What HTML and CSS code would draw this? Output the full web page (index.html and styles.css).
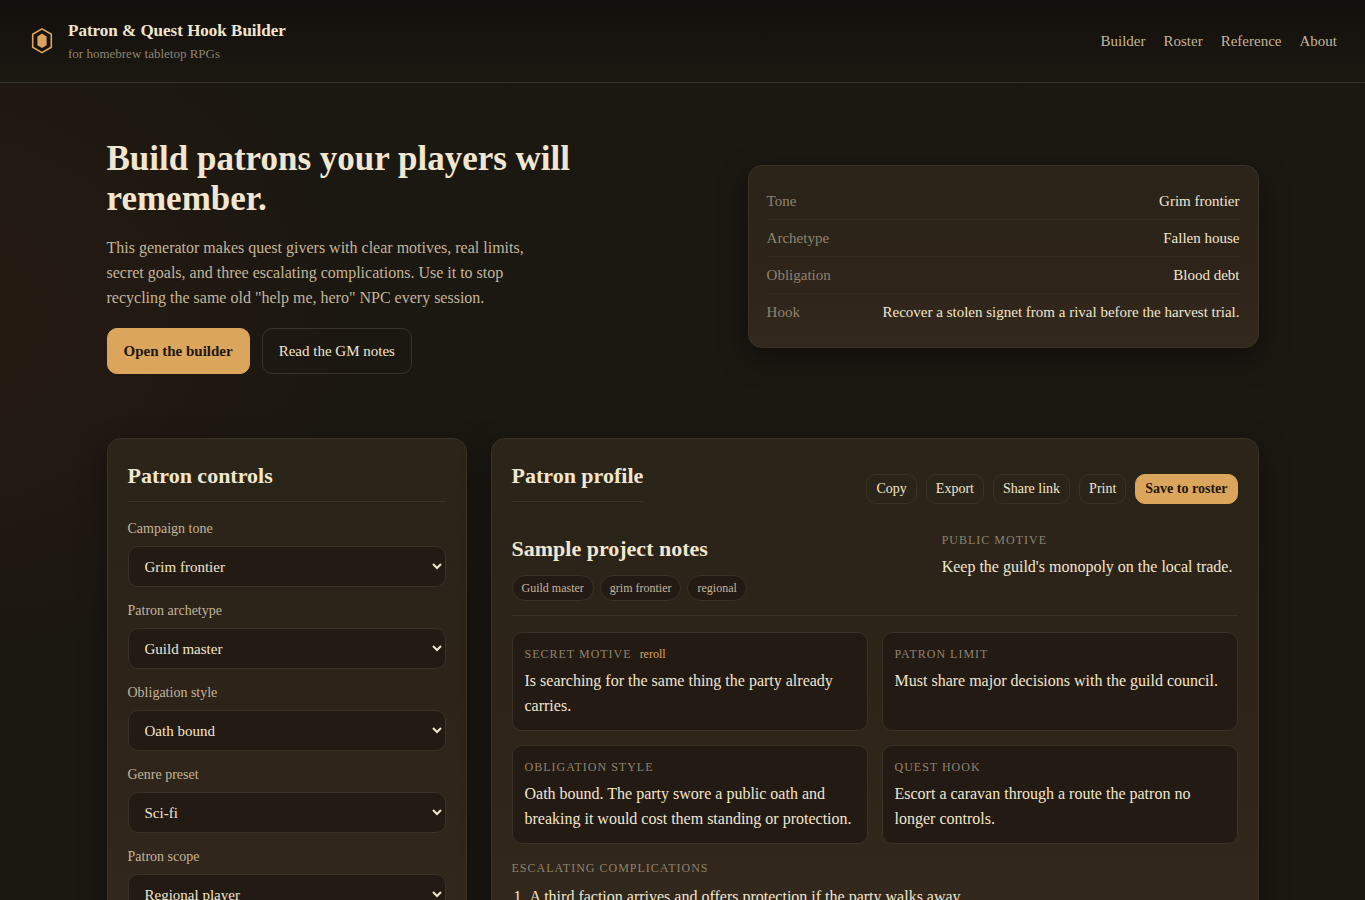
FILE: index.html
```html
<!DOCTYPE html>
<html lang="en">
<head>
  <meta charset="UTF-8">
  <meta name="viewport" content="width=device-width, initial-scale=1.0">
  <title>Patron &amp; Quest Hook Builder</title>
  <link rel="stylesheet" href="styles.css">
</head>
<body>
  <header class="site-header">
    <div class="brand">
      <svg class="brand-mark" viewBox="0 0 28 28" width="28" height="28" aria-hidden="true">
        <path d="M14 1.9 L23.3 7.2 V20.3 L14 25.6 L4.7 20.3 V7.2 Z" fill="none" stroke="currentColor" stroke-width="1.6"/>
        <path d="M14 6.6 L18.6 9.4 V18.2 L14 21 L9.4 18.2 V9.4 Z" fill="currentColor"/>
      </svg>
      <div>
        <p class="brand-title">Patron &amp; Quest Hook Builder</p>
        <p class="brand-sub">for homebrew tabletop RPGs</p>
      </div>
    </div>
    <nav class="site-nav">
      <a href="#builder">Builder</a>
      <a href="#roster">Roster</a>
      <a href="#reference">Reference</a>
      <a href="#about">About</a>
    </nav>
  </header>

  <main class="container">
    <section class="hero">
      <div>
        <h1>Build patrons your players will remember.</h1>
        <p class="hero-text">This generator makes quest givers with clear motives, real limits, secret goals, and three escalating complications. Use it to stop recycling the same old "help me, hero" NPC every session.</p>
        <div class="hero-actions">
          <a class="btn btn-primary" href="#builder">Open the builder</a>
          <a class="btn" href="#reference">Read the GM notes</a>
        </div>
      </div>
      <dl class="preview">
        <div class="preview-row"><dt>Tone</dt><dd>Grim frontier</dd></div>
        <div class="preview-row"><dt>Archetype</dt><dd>Fallen house</dd></div>
        <div class="preview-row"><dt>Obligation</dt><dd>Blood debt</dd></div>
        <div class="preview-row"><dt>Hook</dt><dd>Recover a stolen signet from a rival before the harvest trial.</dd></div>
      </dl>
    </section>

    <section class="builder" id="builder">
      <form class="panel">
        <h2>Patron controls</h2>
        <div class="field">
          <label for="tone">Campaign tone</label>
          <select id="tone">
            <option>Grim frontier</option>
            <option>High court</option>
          </select>
        </div>
        <div class="field">
          <label for="archetype">Patron archetype</label>
          <select id="archetype">
            <option>Guild master</option>
            <option>Fallen house</option>
          </select>
        </div>
        <div class="field">
          <label for="obligation">Obligation style</label>
          <select id="obligation">
            <option>Oath bound</option>
            <option>Blood debt</option>
          </select>
        </div>
        <div class="field">
          <label for="genre">Genre preset</label>
          <select id="genre">
            <option>Sci-fi</option>
            <option>Fantasy</option>
          </select>
        </div>
        <div class="field">
          <label for="scope">Patron scope</label>
          <select id="scope">
            <option>Regional player</option>
            <option>Local player</option>
          </select>
        </div>
      </form>

      <article class="panel">
        <div class="panel-head">
          <h2>Patron profile</h2>
          <div class="actions">
            <button class="btn btn-small" type="button">Copy</button>
            <button class="btn btn-small" type="button">Export</button>
            <button class="btn btn-small" type="button">Share link</button>
            <button class="btn btn-small" type="button">Print</button>
            <button class="btn btn-small btn-primary" type="button">Save to roster</button>
          </div>
        </div>

        <div class="profile-top">
          <div>
            <h3>Sample project notes</h3>
            <ul class="chips">
              <li>Guild master</li>
              <li>grim frontier</li>
              <li>regional</li>
            </ul>
          </div>
          <div>
            <h4 class="label">Public motive</h4>
            <p>Keep the guild's monopoly on the local trade.</p>
          </div>
        </div>

        <div class="cards">
          <div class="card">
            <div class="card-head">
              <h4 class="label">Secret motive</h4>
              <button class="reroll" type="button">reroll</button>
            </div>
            <p>Is searching for the same thing the party already carries.</p>
          </div>
          <div class="card">
            <h4 class="label">Patron limit</h4>
            <p>Must share major decisions with the guild council.</p>
          </div>
          <div class="card">
            <h4 class="label">Obligation style</h4>
            <p>Oath bound. The party swore a public oath and breaking it would cost them standing or protection.</p>
          </div>
          <div class="card">
            <h4 class="label">Quest hook</h4>
            <p>Escort a caravan through a route the patron no longer controls.</p>
          </div>
        </div>

        <h4 class="label">Escalating complications</h4>
        <ol class="complications">
          <li>A third faction arrives and offers protection if the party walks away.</li>
        </ol>
      </article>
    </section>
  </main>
</body>
</html>
```
FILE: styles.css
```css
:root {
  --bg: #1b1711;
  --field: #231a13;
  --line: #3a3226;
  --text: #f1e6cf;
  --muted: #c3b59b;
  --dim: #8f8370;
  --accent: #dba65c;
}

* {
  box-sizing: border-box;
  margin: 0;
  padding: 0;
}

body {
  font-family: "Liberation Serif", "Times New Roman", serif;
  font-size: 16px;
  line-height: 25px;
  color: var(--text);
  background: radial-gradient(420px 340px at -60px 320px, #271b13, transparent) var(--bg);
}

a {
  color: inherit;
  text-decoration: none;
}

/* Header */
.site-header {
  display: flex;
  align-items: center;
  justify-content: space-between;
  padding: 18px 28px;
  border-bottom: 1px solid #37332c;
  background: linear-gradient(#130f0c, #1b1711);
}

.brand {
  display: flex;
  align-items: center;
  gap: 12px;
}

.brand-mark {
  color: var(--accent);
}

.brand-title {
  font-size: 17px;
  line-height: 26px;
  font-weight: bold;
}

.brand-sub {
  font-size: 13px;
  line-height: 20px;
  color: var(--dim);
}

.site-nav {
  display: flex;
  gap: 18px;
  font-size: 15px;
  color: var(--muted);
}

.container {
  max-width: 1200px;
  margin: 0 auto;
  padding: 0 24px;
}

/* Hero */
.hero {
  display: grid;
  grid-template-columns: 1.2fr 1fr;
  align-items: center;
  gap: 28px;
  padding: 56px 0 64px;
}

h1 {
  max-width: 560px;
  margin-bottom: 16px;
  font-size: 35px;
  line-height: 40px;
}

.hero-text {
  max-width: 440px;
  margin-bottom: 18px;
  color: var(--muted);
}

.hero-actions {
  display: flex;
  gap: 12px;
}

.btn {
  padding: 10px 16px;
  border: 1px solid var(--line);
  border-radius: 10px;
  background: none;
  font-family: inherit;
  font-size: 15px;
  line-height: 24px;
  color: var(--text);
}

.btn-small {
  padding: 4px 9px;
  font-size: 14px;
  line-height: 20px;
}

.btn-primary {
  border-color: var(--accent);
  background: var(--accent);
  color: #1f160d;
  font-weight: bold;
}

.preview,
.panel {
  border: 1px solid var(--line);
  border-radius: 14px;
  background: linear-gradient(#2a2419, #2d2319 50%, #32281c);
  box-shadow: 0 10px 30px rgba(0, 0, 0, 0.35);
}

.preview {
  padding: 17px 18px;
  font-size: 15px;
  line-height: 24px;
}

.preview-row {
  display: flex;
  justify-content: space-between;
  gap: 16px;
  padding: 6px 0;
  border-bottom: 1px solid #33291f;
}

.preview-row:last-child {
  border-bottom: none;
}

.preview dt {
  color: var(--dim);
}

/* Builder */
.builder {
  display: grid;
  grid-template-columns: 360px 1fr;
  align-items: start;
  gap: 24px;
  padding-bottom: 64px;
}

.panel {
  padding: 20px;
}

h2 {
  margin-bottom: 16px;
  padding-bottom: 8px;
  border-bottom: 1px solid var(--line);
  font-size: 22px;
  line-height: 34px;
}

.field {
  margin-bottom: 13px;
}

.field label {
  display: block;
  margin-bottom: 6px;
  font-size: 14px;
  line-height: 22px;
  color: var(--muted);
}

.field select {
  display: block;
  width: 100%;
  height: 41px;
  padding: 0 12px;
  border: 1px solid var(--line);
  border-radius: 10px;
  background: var(--field);
  font-family: inherit;
  font-size: 15px;
  color: var(--text);
}

.panel-head {
  display: flex;
  align-items: center;
  justify-content: space-between;
  margin-bottom: 13px;
}

.actions {
  display: flex;
  gap: 9px;
}

.profile-top {
  display: grid;
  grid-template-columns: 1.4fr 1fr;
  gap: 16px;
  margin-bottom: 16px;
  padding-bottom: 14px;
  border-bottom: 1px solid var(--line);
}

h3 {
  margin-bottom: 9px;
  font-size: 22px;
  line-height: 35px;
}

.chips {
  display: flex;
  gap: 6px;
  list-style: none;
}

.chips li {
  padding: 2px 9px;
  border: 1px solid var(--line);
  border-radius: 13px;
  background: var(--field);
  font-size: 12px;
  line-height: 20px;
  color: var(--muted);
}

.label {
  margin-bottom: 4px;
  font-size: 12px;
  line-height: 19px;
  font-weight: normal;
  letter-spacing: 1px;
  text-transform: uppercase;
  color: var(--dim);
}

.cards {
  display: grid;
  grid-template-columns: 1fr 1fr;
  gap: 14px;
  margin-bottom: 15px;
}

.card {
  padding: 12px;
  border: 1px solid var(--line);
  border-radius: 10px;
  background: var(--field);
}

.card-head {
  display: flex;
  gap: 8px;
}

.reroll {
  height: 19px;
  border: none;
  background: none;
  font-family: inherit;
  font-size: 12px;
  color: var(--accent);
  cursor: pointer;
}

.complications {
  margin-top: 6px;
  padding-left: 18px;
}
```
